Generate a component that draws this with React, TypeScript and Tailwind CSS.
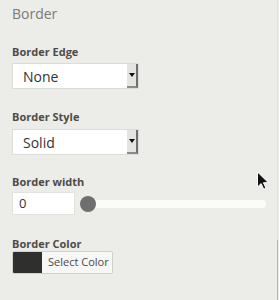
import React from "react";

const Label = ({ children, className = "" }: { children: React.ReactNode; className?: string }) => (
  <div className={`text-[11px] font-bold leading-[14px] text-[#4f4b45] ${className}`}>{children}</div>
);

const Select = ({ value }: { value: string }) => (
  <div className="flex h-[26px] w-[127px] items-stretch border border-[#dcdcd8] bg-white">
    <div className="flex flex-1 items-center pl-[10px] text-[14px] text-[#333]">{value}</div>
    <div className="flex w-[11px] items-center justify-center border-r-2 border-b-2 border-r-[#6e6e6e] border-b-[#8a8a8a] bg-[#e4e4e2]">
      <svg width="6" height="4" viewBox="0 0 6 4">
        <path d="M0 0h6L3 4z" fill="#111" />
      </svg>
    </div>
  </div>
);

const Cursor = () => (
  <svg className="absolute left-[256px] top-[171px]" width="14" height="20" viewBox="0 0 14 20">
    <path d="M1.5 1v15l3.6-3.4 2.6 5.6 2.3-1-2.6-5.5h5z" fill="#111" stroke="#fff" strokeWidth="1" />
  </svg>
);

export default function App() {
  return (
    <div className="relative flex h-[300px] w-[279px] bg-[#ecece9] font-['Open_Sans',sans-serif]">
      <div className="flex flex-1 flex-col pl-[12px] pt-[4px]">
        <div className="text-[14px] leading-[20px] text-[#7a7a78]">Border</div>

        <Label className="mt-[21px]">Border Edge</Label>
        <div className="mt-[4px]">
          <Select value="None" />
        </div>

        <Label className="mt-[21px]">Border Style</Label>
        <div className="mt-[5px]">
          <Select value="Solid" />
        </div>

        <Label className="mt-[20px]">Border width</Label>
        <div className="mt-[3px] flex items-center">
          <div className="flex h-[23px] w-[63px] items-center border border-[#e2e2de] bg-white pl-[6px] text-[13px] text-[#333]">
            0
          </div>
          <div className="relative ml-[5px] flex h-[16px] w-[186px] items-center">
            <div className="h-[8px] w-full rounded-full bg-[#fbfbf9]" />
            <div className="absolute left-0 top-0 h-[16px] w-[16px] rounded-full bg-[#6f6f6f]" />
          </div>
        </div>

        <Label className="mt-[22px]">Border Color</Label>
        <div className="flex h-[23px] w-[101px] overflow-hidden rounded-[2px] border border-[#cfcfcb] bg-[#f7f7f5]">
          <div className="w-[29px] bg-[#2f2f2d]" />
          <div className="flex flex-1 items-center pl-[6px] text-[11px] text-[#4a4a4a]">Select Color</div>
        </div>
      </div>
      <div className="w-[1px] bg-[linear-gradient(to_bottom,#e2e2df_240px,#b4b4b0_240px)]" />
      <div className="w-[1px]" />
      <Cursor />
    </div>
  );
}
